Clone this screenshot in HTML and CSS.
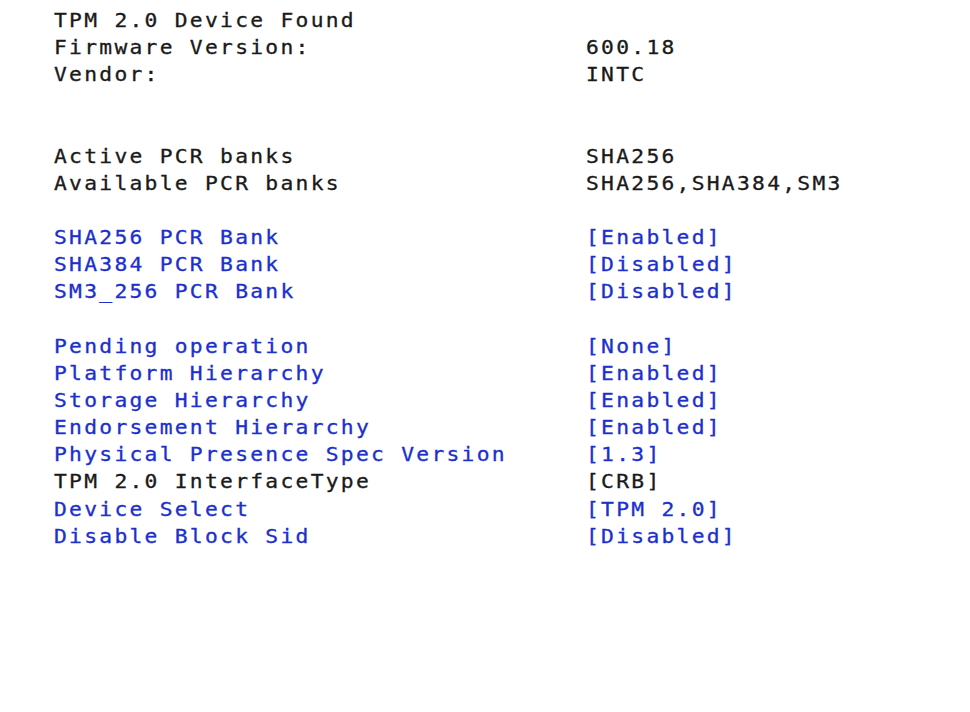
FILE: index.html
```html
<!DOCTYPE html>
<html lang="en">
<head>
  <meta charset="UTF-8">
  <meta name="viewport" content="width=device-width, initial-scale=1.0">
  <title>Trusted Computing</title>
  <link rel="stylesheet" href="styles.css">
</head>
<body>
  <div class="setup">
    <!-- Device info -->
    <div class="label">TPM 2.0 Device Found</div><div class="value"></div>
    <div class="label">Firmware Version:</div><div class="value">600.18</div>
    <div class="label">Vendor:</div><div class="value">INTC</div>
    <div class="gap"></div>
    <div class="gap"></div>

    <div class="label">Active PCR banks</div><div class="value">SHA256</div>
    <div class="label">Available PCR banks</div><div class="value">SHA256,SHA384,SM3</div>
    <div class="gap"></div>

    <!-- PCR bank options -->
    <div class="label option">SHA256 PCR Bank</div><div class="value option">[Enabled]</div>
    <div class="label option">SHA384 PCR Bank</div><div class="value option">[Disabled]</div>
    <div class="label option">SM3_256 PCR Bank</div><div class="value option">[Disabled]</div>
    <div class="gap"></div>

    <!-- TPM options -->
    <div class="label option">Pending operation</div><div class="value option">[None]</div>
    <div class="label option">Platform Hierarchy</div><div class="value option">[Enabled]</div>
    <div class="label option">Storage Hierarchy</div><div class="value option">[Enabled]</div>
    <div class="label option">Endorsement Hierarchy</div><div class="value option">[Enabled]</div>
    <div class="label option">Physical Presence Spec Version</div><div class="value option">[1.3]</div>
    <div class="label">TPM 2.0 InterfaceType</div><div class="value">[CRB]</div>
    <div class="label option">Device Select</div><div class="value option">[TPM 2.0]</div>
    <div class="label option">Disable Block Sid</div><div class="value option">[Disabled]</div>
  </div>
</body>
</html>
```

FILE: styles.css
```css
body {
  margin: 0;
  background-color: #ffffff;
  color: #1a1a1a;
  font-family: 'DejaVu Sans Mono', monospace;
  font-size: 19px;
  -webkit-text-stroke: 0.3px currentColor;
}
.setup {
  display: grid;
  grid-template-columns: 532px 1fr;
  grid-auto-rows: 27.15px;
  align-items: center;
  padding: 7px 0 0 54px;
}
/* wide BIOS-style glyphs: stretch the cell, 15.1px per character */
.label,
.value {
  white-space: pre;
  line-height: 27px;
  letter-spacing: 2.04px;
  transform: scaleX(1.12);
  transform-origin: left center;
}
.gap {
  grid-column: 1 / -1;
}
.option {
  color: #1b30cc;
}
```
